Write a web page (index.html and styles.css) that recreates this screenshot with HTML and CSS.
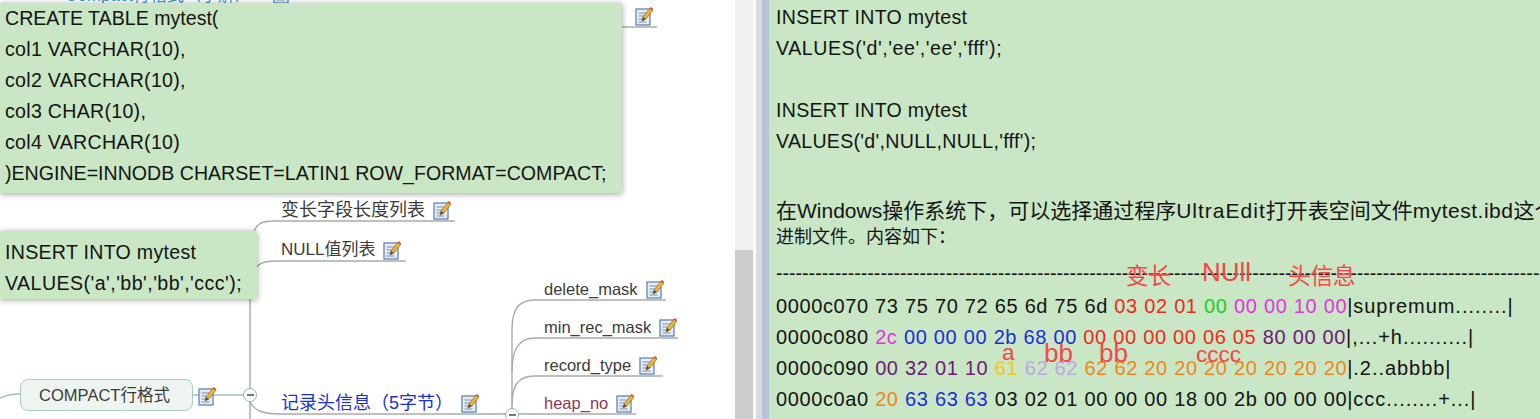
FILE: index.html
```html
<!DOCTYPE html>
<html lang="zh">
<head>
<meta charset="utf-8">
<title>COMPACT行格式</title>
<link rel="stylesheet" href="styles.css">
</head>
<body>
<svg width="0" height="0" class="defs">
  <symbol id="note" viewBox="0 0 18 20">
    <rect x="1" y="3" width="14" height="16" fill="#e6edf8" stroke="#5f86b8" stroke-width="1.3"/>
    <path d="M3.5 7h9M3.5 10h7M3.5 13h5M3.5 16h8" stroke="#7d8fa8" stroke-width="1"/>
    <path d="M7 15l1-4 7-9 3 2-7 9z" fill="#eeb437" stroke="#8a6a20" stroke-width=".7"/>
    <path d="M14.5 2.5l1.2-1.6 2.4 1.8-1.2 1.7z" fill="#d8574a"/>
    <path d="M7 15l1-4 2.8 2z" fill="#4b4b4b"/>
  </symbol>
</svg>
<div class="app">
  <section class="map">
    <svg class="wires" width="735" height="419" viewBox="0 0 735 419">
      <g fill="none" stroke="#a9aaa9" stroke-width="1.4">
        <path d="M250 299V419"/>
        <path d="M254 232C256 224 262 221 272 221H455"/>
        <path d="M256 268C260 262 266 261 280 261H406"/>
        <path d="M250 402C254 410 262 414 280 414H512"/>
        <path d="M512 415V330C512 310 518 300 535 300H666"/>
        <path d="M512 372C512 350 518 338 535 338H678"/>
        <path d="M512 405C512 385 518 376 535 376H663"/>
        <path d="M512 414H636"/>
        <path d="M622 27H657"/>
      </g>
      <path d="M0 398C6 395 12 394 20 394M193 395H243" fill="none" stroke="#9cc5b5" stroke-width="1.4"/>
    </svg>

    <span class="peek">Compact行格式（了解）</span>
    <svg class="note note-peek"><use href="#note"/></svg>

    <div class="topic t-var">变长字段长度列表<svg class="note"><use href="#note"/></svg></div>
    <div class="topic t-null">NULL值列表<svg class="note"><use href="#note"/></svg></div>
    <div class="topic t-del">delete_mask<svg class="note"><use href="#note"/></svg></div>
    <div class="topic t-min">min_rec_mask<svg class="note"><use href="#note"/></svg></div>
    <div class="topic t-rec">record_type<svg class="note"><use href="#note"/></svg></div>
    <div class="topic t-heap">heap_no<svg class="note"><use href="#note"/></svg></div>
    <div class="topic t-head">记录头信息（5字节）<svg class="note"><use href="#note"/></svg></div>
    <svg class="note t-top"><use href="#note"/></svg>

    <div class="compact">COMPACT行格式</div>
    <svg class="note t-compact"><use href="#note"/></svg>
    <span class="toggle t1"></span>
    <span class="toggle t2"></span>

    <div class="pop pop-create">
      <p>CREATE TABLE mytest(</p>
      <p class="sp-s">col1 VARCHAR(10),</p>
      <p class="sp-s">col2 VARCHAR(10),</p>
      <p class="sp-s">col3 CHAR(10),</p>
      <p class="sp-s">col4 VARCHAR(10)</p>
      <p>)ENGINE=INNODB CHARSET=LATIN1 ROW_FORMAT=COMPACT;</p>
    </div>
    <div class="pop pop-insert">
      <p class="sp-s">INSERT INTO mytest</p>
      <p class="sp-m">VALUES('a','bb','bb','ccc');</p>
    </div>
  </section>

  <div class="scrollbar"><div class="thumb"></div></div>
  <div class="split"></div>

  <section class="doc">
    <p class="sp-s">INSERT INTO mytest</p>
    <p class="sp-l">VALUES('d','ee','ee','fff');</p>
    <p class="blank"></p>
    <p class="sp-s">INSERT INTO mytest</p>
    <p class="sp-s">VALUES('d',NULL,NULL,'fff');</p>
    <p class="blank"></p>
    <div class="para">
      <div class="para-a">在<span class="lat">Windows</span>操作系统下，可以选择通过程序<span class="lat lat-w">UltraEdit</span>打开表空间文件<span class="lat lat-n">mytest.ibd</span>这个二</div>
      <div class="para-b">进制文件。内容如下：</div>
    </div>
    <p class="dash">------------------------------------------------------------------------------------------------------------------------</p>
    <p class="hex">0000c070 73 75 70 72 65 6d 75 6d <span class="r">03 02 01</span> <span class="g">00</span> <span class="m">00 00 10 00</span><span class="tail">|supremum........|</span></p>
    <p class="hex">0000c080 <span class="m">2c</span> <span class="b">00 00 00 2b 68 00</span> <span class="r">00 00 00 00 06 05</span> <span class="p">80 00 00</span><span class="tail">|,...+h..........|</span></p>
    <p class="hex">0000c090 <span class="p">00 32 01 10</span> <span class="y">61</span> <span class="l">62 62</span> <span class="o">62 62 20 20 20 20 20 20 20</span><span class="tail">|.2..abbbb|</span></p>
    <p class="hex">0000c0a0 <span class="o">20</span> <span class="b">63 63 63</span> 03 02 01 00 00 00 18 00 2b 00 00 00<span class="tail">|ccc........+...|</span></p>
    <span class="clip-glyph">ll</span>
    <span class="mark m1">变长</span>
    <span class="mark m2">NUll</span>
    <span class="mark m3">头信息</span>
    <span class="mark m4">a</span>
    <span class="mark m5">bb</span>
    <span class="mark m6">bb</span>
    <span class="mark m7">cccc</span>
  </section>
</div>
</body>
</html>
```
FILE: styles.css
```css
* { box-sizing: border-box; }
html, body { margin: 0; height: 419px; overflow: hidden; background: #fff; }
body { font-family: "Liberation Sans", "Noto Sans CJK SC", sans-serif; color: #141414; }
p { margin: 0; }
.defs { position: absolute; }
.app { display: flex; width: 1540px; height: 419px; }

.sp-s { letter-spacing: .28px; }
.sp-m { letter-spacing: .45px; }
.sp-l { letter-spacing: .55px; }

.map { position: relative; width: 735px; height: 419px; background: #fff; overflow: hidden; flex: none; }
.wires { position: absolute; left: 0; top: 0; }

.scrollbar { width: 21px; flex: none; background: #f1f1f1; border-right: 3px solid #fbfbfb; }
.thumb { height: 169px; margin-top: 250px; background: #cdcdcd; }
.split { width: 13px; flex: none; background: linear-gradient(to right, #dcdcdc 0 6px, #b4c5d8 6px); }

.doc { position: relative; flex: 1; min-width: 0; padding: 2px 0 0 7px; background: #c9e6c5; overflow: hidden; white-space: nowrap; }
.doc p { height: 31px; font-size: 19.6px; line-height: 31px; }
.doc p.blank { height: 31px; }
.para { margin-top: 8px; line-height: 29px; }
.para-a { font-size: 21px; }
.para-b { font-size: 18px; margin-top: -2px; }
.lat { font-size: 21px; }
.lat-w { letter-spacing: 1px; }
.lat-n { letter-spacing: .5px; }
.doc p.dash { margin-top: 5px; height: 34px; line-height: 33px; }
.doc p.hex { font-size: 20px; letter-spacing: .6px; word-spacing: .3px; }
.tail { letter-spacing: .95px; }
.r { color: #f02a1e; } .g { color: #22cc22; } .m { color: #e632e0; } .b { color: #1a2fd6; }
.p { color: #6e1a78; } .y { color: #f2c81e; } .l { color: #bfa8e6; } .o { color: #f0861e; }

.mark { position: absolute; color: #f5454a; font-size: 22.5px; line-height: 26px; }
.m1 { left: 357px; top: 264px; }
.m2 { left: 433px; top: 259px; font-size: 26px; }
.m3 { left: 519px; top: 264px; }
.m4 { left: 233px; top: 340px; }
.m5 { left: 275px; top: 340px; font-size: 26px; }
.m6 { left: 330px; top: 340px; font-size: 26px; }
.m7 { left: 427px; top: 342px; }
.clip-glyph { position: absolute; left: 271px; top: 415px; font-size: 20px; line-height: 24px; }

.pop { position: absolute; background: #c9e6c5; box-shadow: 0 1px 6px rgba(0,0,0,.38); font-size: 19.6px; line-height: 31px; white-space: nowrap; padding-left: 5px; }
.pop-create { left: 0; top: 3px; width: 622px; height: 190px; }
.pop-insert { left: 0; top: 231px; width: 257px; height: 68px; padding: 6px 0 0 5px; }

.topic { position: absolute; display: flex; align-items: center; font-size: 16.5px; line-height: 24px; height: 26px; color: #3b3b3b; white-space: nowrap; }
.note { display: block; width: 18px; height: 20px; }
.topic .note { margin-left: 8px; }
.t-var { left: 281px; top: 197px; font-size: 18px; }
.t-null { left: 281px; top: 237px; font-size: 17px; }
.t-del { left: 544px; top: 276px; }
.t-min { left: 544px; top: 314px; }
.t-rec { left: 544px; top: 352px; }
.t-heap { left: 544px; top: 390px; color: #8b3a55; }
.t-head { left: 281px; top: 390px; color: #1a2fd6; font-size: 18px; }
.t-top { position: absolute; left: 635px; top: 6px; }
.note-peek { position: absolute; left: 273px; top: -16px; }
.peek { position: absolute; left: 65px; top: -14px; font-size: 17px; line-height: 20px; color: #2f9ac8; }

.compact { position: absolute; left: 20px; top: 379px; width: 173px; height: 32px; padding-right: 4px; border: 1px solid #a5cfc0; border-radius: 8px; background: #eef5f0; font-size: 16.5px; line-height: 30px; text-align: center; color: #3b3b3b; }
.t-compact { position: absolute; left: 198px; top: 386px; }

.toggle { position: absolute; width: 14px; height: 14px; border-radius: 50%; border: 1px solid #8cb8a6; background: linear-gradient(#777 0 0) center / 7px 2px no-repeat #fff; }
.t1 { left: 243px; top: 388px; }
.t2 { left: 505px; top: 408px; }
```
